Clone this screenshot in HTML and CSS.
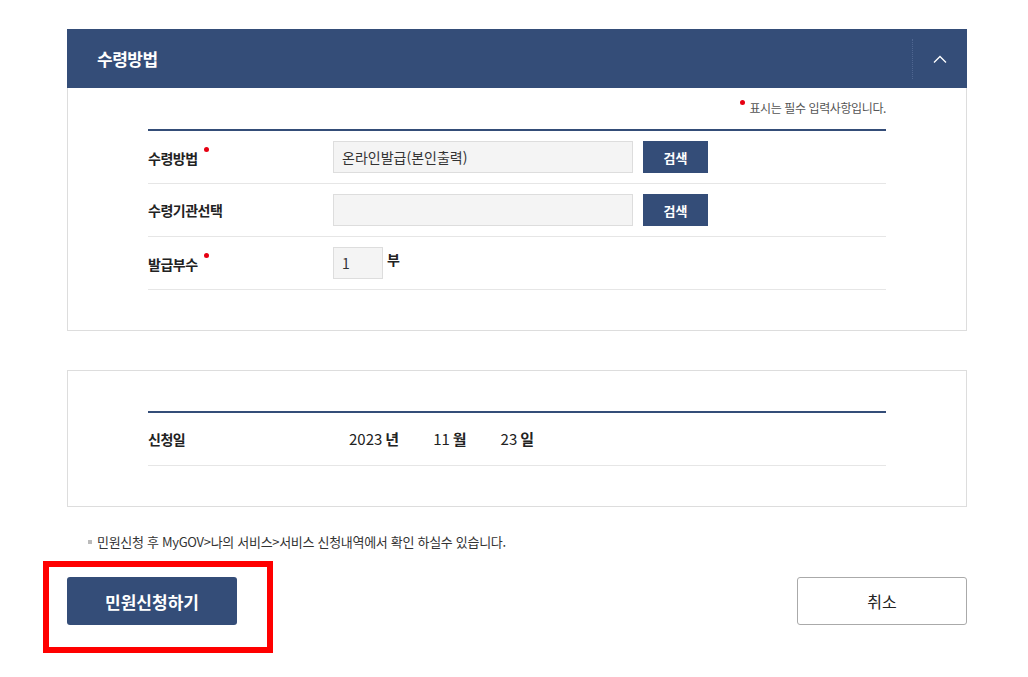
FILE: index.html
```html
<!DOCTYPE html>
<html lang="ko">
    <head>
        <meta charset="utf-8">
        <title>민원신청</title>
        <link rel="stylesheet" href="styles.css">
    </head>
    <body>
        <div class="wrap">
            <div class="panel">
                <div class="panel-head">
                    <h3>수령방법</h3>
                    <button class="fold" type="button">
                        <svg width="14" height="8" viewBox="0 0 14 8"><path d="M1 7.5 L7 1.5 L13 7.5" fill="none" stroke="#fff" stroke-width="1.3"/></svg>
                    </button>
                </div>
                <div class="panel-body">
                    <p class="req-note"><span class="dot"></span>표시는 필수 입력사항입니다.</p>
                    <div class="form-table">
                        <div class="row">
                            <div class="label req">수령방법</div>
                            <div class="field">
                                <input class="text" type="text" value="온라인발급(본인출력)" readonly>
                                <button class="btn-search" type="button">검색</button>
                            </div>
                        </div>
                        <div class="row">
                            <div class="label">수령기관선택</div>
                            <div class="field">
                                <input class="text" type="text" readonly>
                                <button class="btn-search" type="button">검색</button>
                            </div>
                        </div>
                        <div class="row">
                            <div class="label req">발급부수</div>
                            <div class="field">
                                <input class="text small" type="text" value="1">
                                <span class="unit">부</span>
                            </div>
                        </div>
                    </div>
                </div>
            </div>

            <div class="panel plain">
                <div class="panel-body date-body">
                    <div class="form-table">
                        <div class="row">
                            <div class="label">신청일</div>
                            <div class="field date">
                                <span class="d-item"><span class="num">2023</span>년</span>
                                <span class="d-item"><span class="num">11</span>월</span>
                                <span class="d-item"><span class="num">23</span>일</span>
                            </div>
                        </div>
                    </div>
                </div>
            </div>

            <p class="info">민원신청 후 MyGOV&gt;나의 서비스&gt;서비스 신청내역에서 확인 하실수 있습니다.</p>

            <div class="actions">
                <div class="submit-box">
                    <button class="btn-submit" type="button">민원신청하기</button>
                    <span class="highlight"></span>
                </div>
                <button class="btn-cancel" type="button">취소</button>
            </div>
        </div>
    </body>
</html>
```

FILE: styles.css
```css
body {
    margin: 0;
    background: #fff;
    color: #222;
    font-family: "Noto Sans CJK KR", "Noto Sans", sans-serif;
}

.wrap {
    width: 900px;
    margin-left: 67px;
    padding-top: 29px;
    padding-bottom: 60px;
}

.panel-head {
    display: flex;
    align-items: center;
    height: 59px;
    background-color: #344d78;
    padding-left: 30px;
}
.panel-head h3 {
    flex: 1;
    margin: 0;
    color: #fff;
    font-size: 17px;
    font-weight: bold;
    letter-spacing: -0.5px;
}
.fold {
    width: 55px;
    height: 40px;
    border: 0;
    border-left: 1px dotted #4f6690;
    background: none;
    padding: 0;
    display: flex;
    align-items: center;
    justify-content: center;
}

.panel-body {
    border: 1px solid #ddd;
    border-top: 0;
    padding: 0 80px 40px 80px;
}
.plain .panel-body {
    border-top: 1px solid #ddd;
}
.panel.plain {
    margin-top: 39px;
}
.date-body {
    padding-top: 40px;
}

.req-note {
    margin: 0;
    padding: 11px 0 12px;
    text-align: right;
    font-size: 12px;
    color: #555;
    letter-spacing: -0.4px;
    line-height: 18px;
}
.dot, .req::after {
    display: inline-block;
    width: 5px;
    height: 5px;
    border-radius: 50%;
    background: #e60012;
}
.dot {
    vertical-align: 8px;
    margin-right: 4px;
}

.form-table {
    border-top: 2px solid #344d78;
}
.row {
    display: flex;
    align-items: center;
    height: 52px;
    border-bottom: 1px solid #e6e6e6;
}
.label {
    width: 185px;
    font-size: 14px;
    font-weight: bold;
    letter-spacing: -0.5px;
    color: #222;
}
.req::after {
    content: "";
    margin-left: 6px;
    vertical-align: 12px;
}
.field {
    display: flex;
    align-items: center;
}
.text {
    box-sizing: border-box;
    width: 300px;
    height: 32px;
    border: 1px solid #ddd;
    background: #f4f4f4;
    padding: 0 8px;
    font-family: inherit;
    font-size: 14px;
    color: #333;
}
.text.small {
    width: 50px;
}
.btn-search {
    width: 65px;
    height: 32px;
    margin-left: 10px;
    border: 0;
    background: #344d78;
    color: #fff;
    font-family: inherit;
    font-size: 13px;
    font-weight: bold;
}
.unit {
    margin-left: 4px;
    font-size: 14px;
    font-weight: bold;
    align-self: flex-start;
    margin-top: 2px;
}

.date {
    padding-left: 16px;
    font-size: 15px;
    font-weight: bold;
    margin-top: -2px;
}
.d-item {
    margin-right: 34px;
}
.num {
    font-weight: normal;
    margin-right: 3px;
}

.info {
    margin: 25px 0 0 21px;
    font-size: 13px;
    color: #333;
    letter-spacing: -0.3px;
    position: relative;
    padding-left: 9px;
}
.info::before {
    content: "";
    position: absolute;
    left: 0;
    top: 8px;
    width: 4px;
    height: 4px;
    background: #bbb;
}

.actions {
    display: flex;
    justify-content: space-between;
    margin-top: 26px;
}
.submit-box {
    position: relative;
}
.btn-submit {
    display: block;
    width: 170px;
    height: 48px;
    border: 0;
    border-radius: 3px;
    background: #344d78;
    color: #fff;
    font-family: inherit;
    font-size: 17px;
    font-weight: bold;
}
.highlight {
    position: absolute;
    left: -24px;
    top: -16px;
    width: 218px;
    height: 80px;
    border: 6px solid #ff0000;
}
.btn-cancel {
    width: 170px;
    height: 48px;
    border: 1px solid #aaa;
    border-radius: 3px;
    background: #fff;
    color: #222;
    font-family: inherit;
    font-size: 16px;
}
```
